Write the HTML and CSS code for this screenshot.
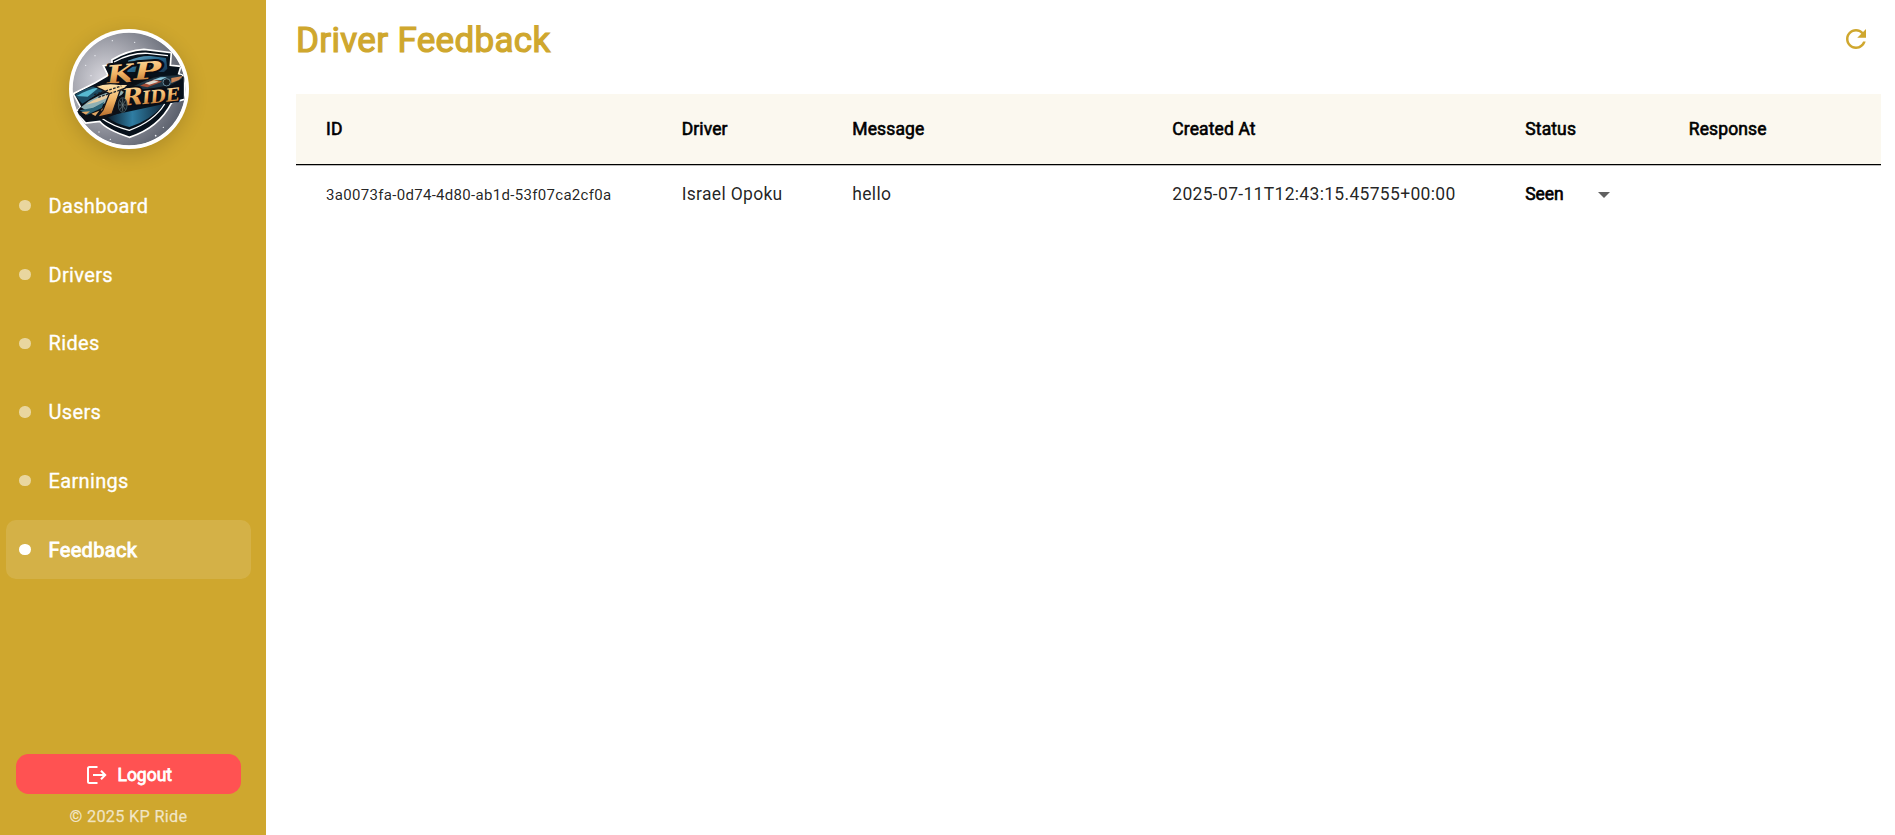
FILE: index.html
```
<!DOCTYPE html>
<html lang="en">
<head>
<meta charset="utf-8">
<title>KP Ride – Driver Feedback</title>
<link rel="stylesheet" href="styles.css">
</head>
<body>
<div class="app">
  <aside class="sidebar">
    <div class="logo">
      <svg viewBox="55 41 360 360" width="120" height="120" aria-label="KP Ride">
        <defs>
          <radialGradient id="silver" cx=".3" cy=".42" r=".7">
            <stop offset="0" stop-color="#dcdbe1"/><stop offset=".45" stop-color="#a4a5ae"/><stop offset="1" stop-color="#5d626e"/>
          </radialGradient>
          <linearGradient id="gold" x1="0" y1="0" x2="0" y2="1">
            <stop offset="0" stop-color="#ffe3ac"/><stop offset=".5" stop-color="#f0b263"/><stop offset="1" stop-color="#b56a2a"/>
          </linearGradient>
          <linearGradient id="blue" x1="0" y1="0" x2="1" y2="1">
            <stop offset="0" stop-color="#73b4d1"/><stop offset=".5" stop-color="#28658a"/><stop offset="1" stop-color="#173650"/>
          </linearGradient>
          <linearGradient id="deep" x1="0" y1="0" x2="1" y2="0">
            <stop offset="0" stop-color="#0b1a28"/><stop offset=".45" stop-color="#2f7da3"/><stop offset="1" stop-color="#10273a"/>
          </linearGradient>
          <clipPath id="disc"><circle cx="235" cy="221" r="169"/></clipPath>
        </defs>
        <circle cx="235" cy="221" r="180" fill="#fff"/>
        <g clip-path="url(#disc)">
          <circle cx="235" cy="221" r="170" fill="url(#silver)"/>
          <g fill="#eef0f5">
            <circle cx="185" cy="76" r="2"/><circle cx="133" cy="121" r="2"/><circle cx="105" cy="150" r="2"/><circle cx="121" cy="181" r="2"/><circle cx="315" cy="361" r="2.500"/><circle cx="338" cy="336" r="2"/><circle cx="179" cy="372" r="2"/><circle cx="252" cy="81" r="2"/><circle cx="145" cy="350" r="2"/>
          </g>
          <path d="M184 133 Q230 105 280 102 L362 112 L359 150 L391 153 L384 175 L402 182 L402 252 L363 262 Q324 338 236 366 Q167 343 147 318 L105 323 L75 290 L90 276 L68 235 L134 202 L172 180 L158 151 L184 149Z" fill="#07111b" stroke="#fff" stroke-width="5"/>
          <path d="M232 136 Q270 120 300 122 L346 128 L350 160 L340 170 L230 170Z" fill="url(#blue)"/>
          <path d="M190 140 Q240 112 291 114 L352 121" fill="none" stroke="#fff" stroke-width="4"/>
          <path d="M168 303 L340 266 Q300 316 236 335 Q190 325 168 303Z" fill="url(#deep)"/>
          <path d="M152 308 Q187 333 236 345 Q310 318 342 266" fill="none" stroke="#fff" stroke-width="4"/>
          <path d="M72 239 Q102 215 145 211 L196 205 L142 236 L95 265Z" fill="#1c4c63"/>
          <path d="M78 242 Q111 222 146 216 L111 244Z" fill="#58b9d0"/>
          <path d="M82 284 Q123 235 207 213 L310 184 L390 178 L397 189 L362 215 L270 235 L215 290 L160 310 L105 316Z" fill="#0d1016"/>
          <path d="M91 276 Q134 235 208 225 L232 218 L212 239 L160 265 L108 286Z" fill="#8fb0b4"/>
          <path d="M105 268 Q147 240 210 226 L190 240 L139 260Z" fill="#e9cda2"/>
          <path d="M87 285 L128 277 L161 259 L153 278 L110 298Z" fill="#2b6478"/>
          <path d="M92 290 l26 -2 l-12 10z M122 295 l24 -9 l-12 16z M150 285l14 -12 -4 16z" fill="#dfa463"/>
        </g>
        <g clip-path="url(#disc)">
          <g fill="url(#gold)" stroke="#090d14" stroke-width="12" stroke-linejoin="round" paint-order="stroke" font-family="DejaVu Serif, serif" font-weight="700" font-style="italic">
            <text x="170" y="206" font-size="76" textLength="86" lengthAdjust="spacingAndGlyphs" transform="rotate(-5 170 206)">K</text>
            <text x="250" y="194" font-size="72" textLength="84" lengthAdjust="spacingAndGlyphs" transform="rotate(-4 250 194)">P</text>
          </g>
          <path d="M245 214 Q301 186 333 182 L393 179 L395 190 L359 209 L275 224Z" fill="#1e3442"/>
          <path d="M268 211 L312 192 L334 199 L290 216Z" fill="#a44c35"/>
          <path d="M282 204l28 -9 14 4-28 9z" fill="#ded8cd"/>
          <path d="M305 195 l24 -9 20 -1 -18 9z" fill="#8cc6da"/>
          <path d="M362 188 L397 182 L385 194 L362 203Z" fill="#c98558"/>
          <circle cx="348" cy="201" r="11" fill="#111820" stroke="#66899a" stroke-width="3"/>
          <g fill="url(#gold)" stroke="#090d14" stroke-width="10" stroke-linejoin="round" paint-order="stroke" font-family="DejaVu Serif, serif" font-weight="700" font-style="italic">
            <text x="214" y="271" font-size="70" textLength="66" lengthAdjust="spacingAndGlyphs" transform="rotate(-5 214 271)">R</text>
            <text x="276" y="267" font-size="54" textLength="113" lengthAdjust="spacingAndGlyphs" transform="rotate(-6 276 267)">IDE</text>
          </g>
          <path d="M133 214 Q165 200 205 207 L236 206 L222 219 L209 224 L184 296 L139 306 L157 284 L176 235 Q154 222 133 214Z" fill="url(#gold)" stroke="#11131a" stroke-width="4"/>
          <path d="M130 238 L212 212 M143 246 L215 222" stroke="#1c2229" stroke-width="4" stroke-dasharray="8 4"/>
          <ellipse cx="216" cy="269" rx="13" ry="22" fill="#101920" stroke="#3c535c" stroke-width="3"/>
          <path d="M216 249v39 M205 269h22 M208 256l16 27 M224 256l-16 27" stroke="#6e7d80" stroke-width="2"/>
        </g>
      </svg>
    </div>
    <nav class="menu">
      <a class="item"><span class="dot"></span>Dashboard</a>
      <a class="item"><span class="dot"></span>Drivers</a>
      <a class="item"><span class="dot"></span>Rides</a>
      <a class="item"><span class="dot"></span>Users</a>
      <a class="item"><span class="dot"></span>Earnings</a>
      <a class="item active"><span class="dot"></span>Feedback</a>
    </nav>
    <div class="bottom">
      <button class="logout">
        <svg class="logout-icon" viewBox="0 0 20 18" width="20" height="18" fill="none" stroke="#fff" stroke-width="2"><path d="M10.500 1H2.500Q1 1 1 2.500V15.500Q1 17 2.500 17H10.500M6 9H18M14 4.800L18.200 9L14 13.200"/></svg>
        <span>Logout</span>
      </button>
      <p class="copyright">© 2025 KP Ride</p>
    </div>
  </aside>
  <main class="main">
    <header class="top">
      <h1 class="title">Driver Feedback</h1>
      <svg class="refresh" viewBox="0 0 24 24" width="30" height="30" fill="#cfa72e"><path d="M17.650 6.350C16.200 4.900 14.210 4 12 4c-4.420 0-7.990 3.580-7.990 8s3.570 8 7.990 8c3.730 0 6.840-2.550 7.730-6h-2.080c-.82 2.330-3.040 4-5.650 4-3.310 0-6-2.690-6-6s2.690-6 6-6c1.660 0 3.140.69 4.220 1.780L13 11h7V4l-2.350 2.350z"/></svg>
    </header>
    <section class="table">
      <div class="row head">
        <span>ID</span><span>Driver</span><span>Message</span><span>Created At</span><span>Status</span><span>Response</span>
      </div>
      <div class="row body">
        <span class="id">3a0073fa-0d74-4d80-ab1d-53f07ca2cf0a</span><span>Israel Opoku</span><span>hello</span><span>2025-07-11T12:43:15.45755+00:00</span>
        <span class="status"><span class="seen">Seen</span><span class="caret"></span></span><span></span>
      </div>
    </section>
  </main>
</div>
</body>
</html>
```
FILE: styles.css
```
* { box-sizing: border-box; }
body { margin: 0; font-family: Roboto, sans-serif; background: #fff; }
.app { display: flex; height: 835px; }
.sidebar { width: 266px; flex: none; background: #cfa72e; display: flex; flex-direction: column; padding: 29px 15px 0 6px; color: #fff; }
.logo { width: 120px; height: 120px; margin-left: 62.500px; border-radius: 50%; box-shadow: 0 5px 20px rgba(0,0,0,.16); }
.logo svg { display: block; }
.menu { margin-top: 27.400px; display: flex; flex-direction: column; gap: 10px; }
.item { height: 58.750px; display: flex; align-items: center; gap: 18px; padding-left: 13.300px; border-radius: 10px; font-size: 20px; letter-spacing: .33px; -webkit-text-stroke: .3px #fff; }
.dot { width: 11.250px; height: 11.250px; border-radius: 50%; background: rgba(255,255,255,.54); }
.active { background: rgba(255,255,255,.12); -webkit-text-stroke: .9px #fff; }
.active .dot { background: #fff; }
.bottom { margin-top: auto; padding: 0 10px; height: 81px; }
.logout { width: 225px; height: 40px; display: flex; align-items: center; justify-content: center; gap: 10.500px; border: 0; border-radius: 12.500px; background: #ff5252; color: #fff; padding: 2px 0 0 2px; font: 400 17.500px Roboto, sans-serif; -webkit-text-stroke: .8px #fff; }
.copyright { margin: 13px 0 0; text-align: center; width: 225px; font-size: 16.250px; line-height: 20px; letter-spacing: .3px; color: rgba(255,255,255,.7); -webkit-text-stroke: .25px rgba(255,255,255,.5); }
.main { flex: 1; padding: 0 14px 0 30px; }
.top { height: 94px; display: flex; align-items: flex-start; justify-content: space-between; padding: 19px 10px 0 0; }
.title { margin: 1px 0 0; font-size: 35px; line-height: 41px; font-weight: 400; letter-spacing: .32px; color: #cfa72e; -webkit-text-stroke: 1.200px #cfa72e; }
.refresh { margin-top: 5px; }
.row { display: grid; grid-template-columns: 355.700px 170.600px 320px 353px 163.500px 1fr; padding-left: 30px; align-items: center; font-size: 17.500px; }
.head { height: 71px; background: #fbf8ef; border-bottom: 1px solid #000; color: #000; letter-spacing: .12px; -webkit-text-stroke: .6px #000; box-shadow: 0 1px 0 #bbb; }
.body { height: 58px; color: rgba(0,0,0,.87); letter-spacing: .3125px; }
.id { font-size: 15px; padding-top: 1px; }
.status { display: flex; align-items: center; color: #000; letter-spacing: -.1px; }
.seen { width: 72.500px; -webkit-text-stroke: .6px #000; }
.caret { border: 6.250px solid transparent; border-top-color: #616161; border-bottom: 0; margin-top: 1px; }
```
